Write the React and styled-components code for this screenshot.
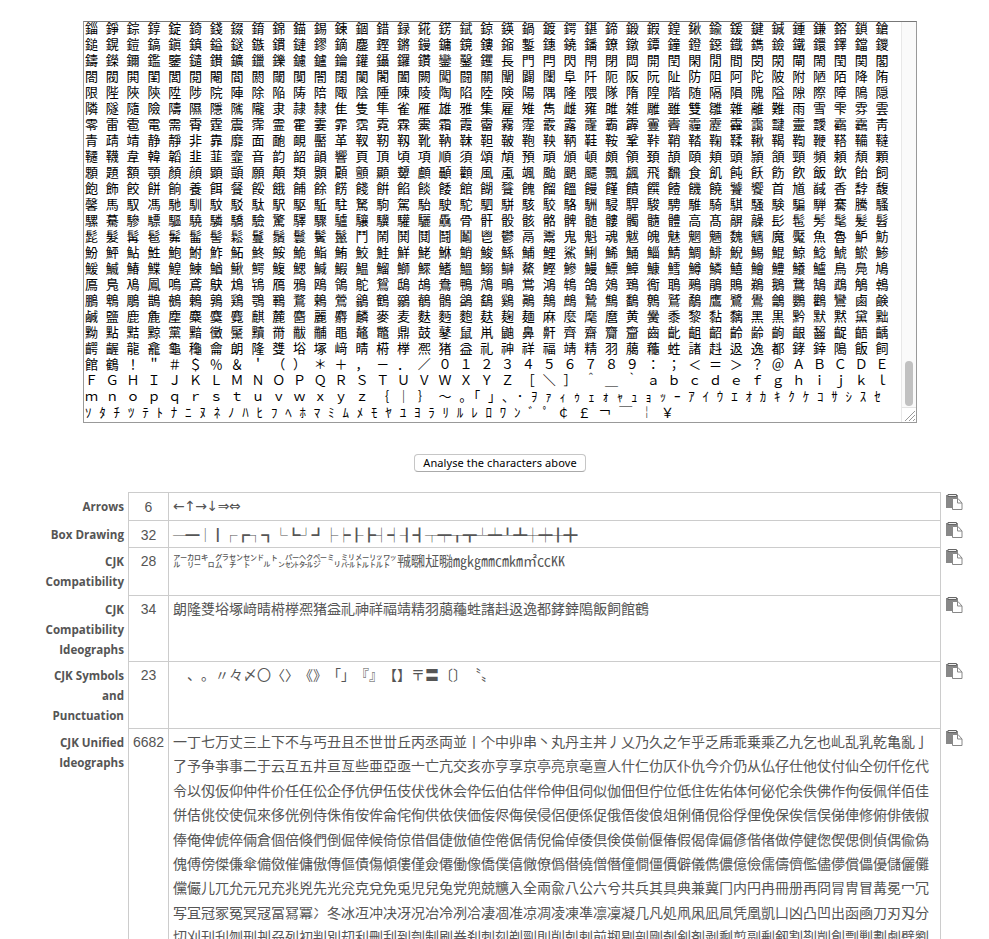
import React from "react";
import styled, { createGlobalStyle } from "styled-components";

const GlobalStyle = createGlobalStyle`
  * { box-sizing: border-box; }
  html, body { margin: 0; background: #fff; }
  body { width: 989px; height: 939px; overflow: hidden; font-family: "Liberation Sans", "Noto Sans CJK JP", sans-serif; color: #555; }
`;

/* Every double-byte Shift_JIS character, unique, in code point order. */
function shiftJisCharacters() {
  const decoder = new TextDecoder("shift_jis");
  const found = new Set();
  for (let lead = 0x81; lead <= 0xfc; lead++) {
    if (lead >= 0xa0 && lead <= 0xdf) continue;
    if (lead >= 0xf0 && lead <= 0xf9) continue;
    for (let trail = 0x40; trail <= 0xfc; trail++) {
      if (trail === 0x7f) continue;
      const text = decoder.decode(new Uint8Array([lead, trail]));
      if (text.length === 1 && text !== "\ufffd") found.add(text);
    }
  }
  for (let kana = 0xff61; kana <= 0xff9f; kana++) found.add(String.fromCharCode(kana));
  return [...found].sort();
}

const ALL = shiftJisCharacters();
const between = (from, to) => ALL.filter((c) => c.charCodeAt(0) >= from && c.charCodeAt(0) <= to);

/* The zero-width space keeps the halfwidth voicing marks from joining the space before them. */
const SCROLLED_TEXT = ALL.slice(ALL.indexOf("錙"))
  .join(" ")
  .replace(/[\uff9e\uff9f]/g, "\u200b$&");
const UNIFIED = between(0x4e00, 0x9fff);

const BLOCKS = [
  { name: "Arrows", text: "←↑→↓⇒⇔", height: 28, face: "arrows" },
  { name: "Box Drawing", text: "─━│┃┌┏┐┓└┗┘┛├┝┠┣┤┥┨┫┬┯┰┳┴┷┸┻┼┿╂╋", height: 27, face: "box" },
  { name: "CJK Compatibility", text: "㌃㌍㌔㌘㌢㌣㌦㌧㌫㌶㌻㍉㍊㍍㍑㍗㍻㍼㍽㍾㎎㎏㎜㎝㎞㎡㏄㏍", height: 48 },
  { name: "CJK Compatibility Ideographs", text: between(0xf900, 0xfaff).join(""), height: 66 },
  { name: "CJK Symbols and Punctuation", text: "\u3000、。〃々〆〇〈〉《》「」『』【】〒〓〔〕〝〟", height: 67 },
  { name: "CJK Unified Ideographs", text: UNIFIED.slice(0, 486).join(""), count: UNIFIED.length, height: 260 },
];

const Page = styled.main`
  height: 939px;
  padding-top: 21px;
  overflow: hidden;
  display: flex;
  flex-direction: column;
`;

const TextBox = styled.div`
  flex: none;
  width: 834px;
  height: 402px;
  margin-left: 83px;
  border: 1px solid #999;
  border-top-color: #777;
  display: flex;
  overflow: hidden;
`;

const TextContent = styled.div`
  flex: 1;
  padding: 0 11px 0 1px;
  overflow: hidden;
  font: 13px/16px "Liberation Mono", "Noto Sans CJK JP", monospace;
  color: #000;
  word-break: keep-all;
  line-break: anywhere;
`;

const ScrollTrack = styled.div`
  width: 15px;
  border-left: 1px solid #e8e8e8;
  background: #fafafa;
  display: flex;
  flex-direction: column;
  justify-content: flex-end;
  align-items: center;
`;

const Thumb = styled.div`
  width: 8px;
  height: 45px;
  border-radius: 4px;
  background: #c1c1c1;
  margin-bottom: 1px;
`;

const Grip = styled.svg`
  width: 14px;
  height: 15px;
  border-top: 1px solid #e4e4e4;
  background: #fff;
  display: block;
`;

const AnalyseButton = styled.button`
  flex: none;
  width: 172px;
  height: 18px;
  margin: 31px 0 0 414px;
  padding: 0;
  border: 1px solid #c6c6c6;
  border-bottom-color: #aaa;
  border-radius: 4px;
  background: #fff;
  color: #000;
  font: 11px/16px "Noto Sans", sans-serif;
  letter-spacing: 0.1px;
  white-space: nowrap;
`;

const Results = styled.section`
  margin-top: 20px;
  display: flex;
  flex-direction: column;
`;

const Row = styled.div`
  flex: none;
  height: ${(p) => p.$height}px;
  display: grid;
  grid-template-columns: 128px 41px 771px 49px;
`;

const Name = styled.div`
  padding: 5px 4px 0 40px;
  text-align: right;
  font: 700 11.6px/19.9px "Open Sans", sans-serif;
`;

const Count = styled.div`
  border: solid #ccc;
  border-width: 1px 1px 0;
  padding-top: ${(p) => (p.$face ? 2 : 1)}px;
  text-align: center;
  font: 14px/24px "Liberation Sans", sans-serif;
`;

const FACES = {
  arrows: `"DejaVu Sans", sans-serif`,
  box: `"Noto Sans CJK JP", sans-serif`,
};

const TRACKING = { arrows: "-0.55px", box: "-1.4px" };

const Characters = styled.div`
  border-top: 1px solid #ccc;
  padding: ${(p) => (p.$face ? 1 : 0)}px 4px 0;
  overflow: hidden;
  font: 14px/24.4px ${(p) => FACES[p.$face] || FACES.box};
  letter-spacing: ${(p) => TRACKING[p.$face] || "0"};
  text-spacing-trim: space-all;
  word-break: break-all;
  line-break: anywhere;
  white-space: pre-wrap;
`;

const CopyCell = styled.div`
  border-left: 1px solid #ccc;
  padding: 2px 0 0 5px;
`;

const CopyGlyph = styled.svg`
  display: block;
  width: 17px;
  height: 17px;
`;

function CopyIcon() {
  return (
    <CopyGlyph viewBox="0 0 17 17" aria-label="Copy">
      <path d="M0 1H12V14H0Z" fill="#888" />
      <path d="M2 .5H10.5V2.5H2Z" fill="#eee" stroke="#666" />
      <path d="M6.5 4.5H12L16 9V15.5H6.5Z" fill="#fff" stroke="#888" />
      <path d="M11.5 5V9H16" fill="none" stroke="#888" />
    </CopyGlyph>
  );
}

export default function App() {
  return (
    <Page>
      <GlobalStyle />
      <TextBox>
        <TextContent>{SCROLLED_TEXT}</TextContent>
        <ScrollTrack>
          <Thumb />
          <Grip viewBox="0 0 14 14">
            <path d="M3 13L13 3M7 13L13 7M11 13L13 11" stroke="#999" fill="none" />
          </Grip>
        </ScrollTrack>
      </TextBox>
      <AnalyseButton>Analyse the characters above</AnalyseButton>
      <Results>
        {BLOCKS.map((b) => (
          <Row key={b.name} $height={b.height}>
            <Name>{b.name}</Name>
            <Count $face={b.face}>{b.count || b.text.length}</Count>
            <Characters $face={b.face}>{b.text}</Characters>
            <CopyCell><CopyIcon /></CopyCell>
          </Row>
        ))}
      </Results>
    </Page>
  );
}
